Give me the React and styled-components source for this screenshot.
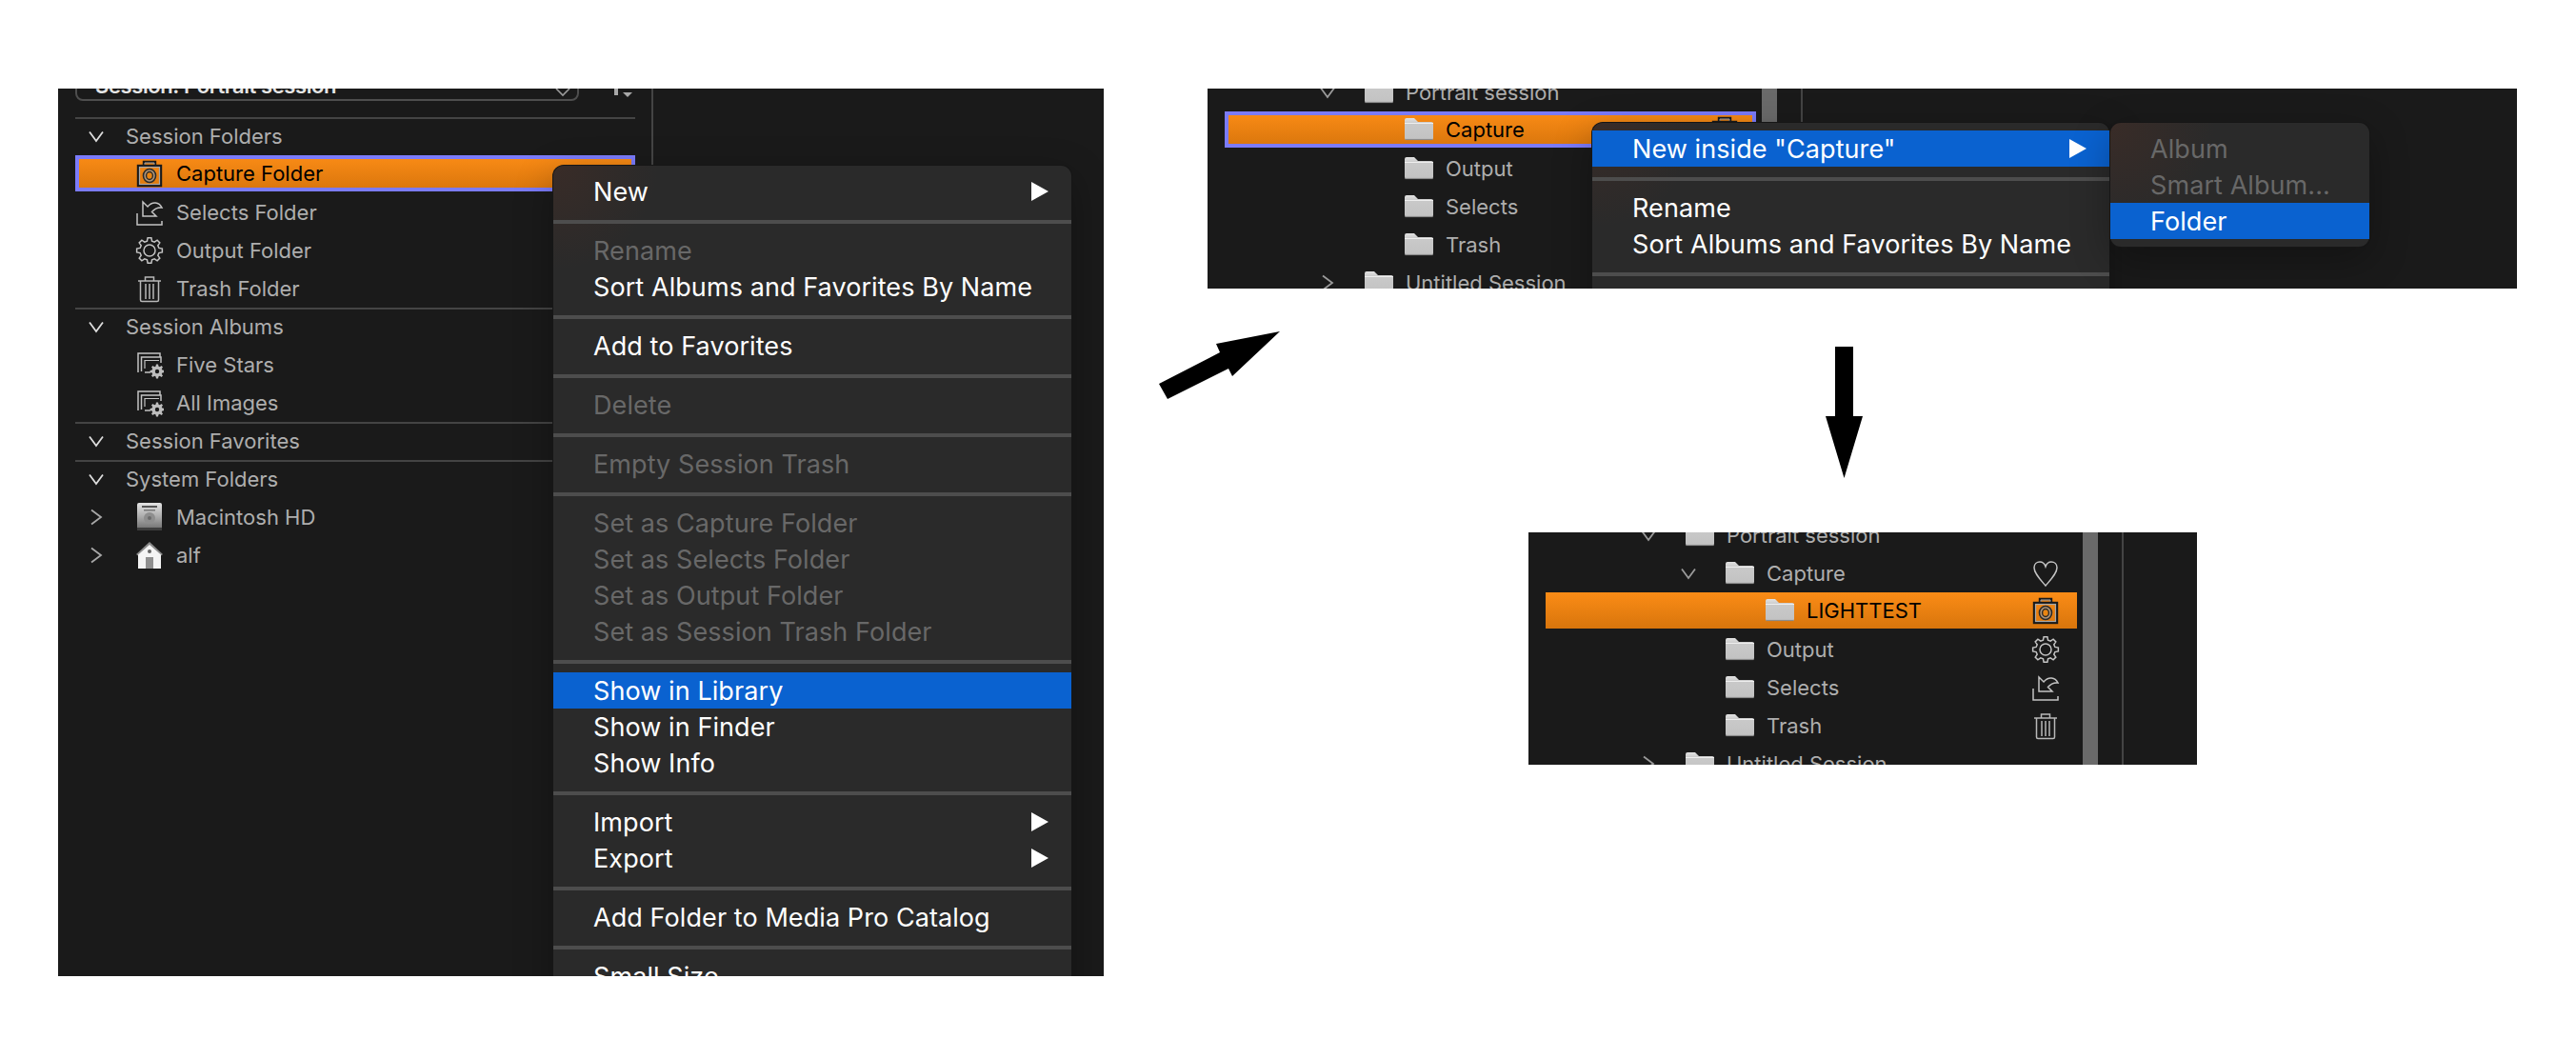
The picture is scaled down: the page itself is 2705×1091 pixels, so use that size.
import * as React from "react";
import styled, { createGlobalStyle } from "styled-components";

const gearPath = (cx, cy, outer, inner, teeth) => {
  const step = (Math.PI * 2) / teeth;
  let d = "";
  for (let i = 0; i < teeth; i++) {
    const a = i * step - Math.PI / 2;
    const pts = [
      [inner, a - step * 0.32],
      [outer, a - step * 0.18],
      [outer, a + step * 0.18],
      [inner, a + step * 0.32],
    ];
    pts.forEach(([r, t], j) => {
      const x = (cx + r * Math.cos(t)).toFixed(2);
      const y = (cy + r * Math.sin(t)).toFixed(2);
      d += `${i === 0 && j === 0 ? "M" : "L"}${x} ${y} `;
    });
  }
  return d + "Z";
};

const sessionRows = [
  { label: "Capture Folder", icon: "camera", selected: true, ring: true },
  { label: "Selects Folder", icon: "selects" },
  { label: "Output Folder", icon: "gear" },
  { label: "Trash Folder", icon: "trash" },
];

const mainMenu = [
  [{ label: "New", more: true }],
  [{ label: "Rename", off: true }, { label: "Sort Albums and Favorites By Name" }],
  [{ label: "Add to Favorites" }],
  [{ label: "Delete", off: true }],
  [{ label: "Empty Session Trash", off: true }],
  [
    { label: "Set as Capture Folder", off: true },
    { label: "Set as Selects Folder", off: true },
    { label: "Set as Output Folder", off: true },
    { label: "Set as Session Trash Folder", off: true },
  ],
  [{ label: "Show in Library", active: true }, { label: "Show in Finder" }, { label: "Show Info" }],
  [{ label: "Import", more: true }, { label: "Export", more: true }],
  [{ label: "Add Folder to Media Pro Catalog" }],
  [{ label: "Small Size" }],
];

const insideMenu = [
  [{ label: 'New inside "Capture"', more: true, active: true }],
  [{ label: "Rename" }, { label: "Sort Albums and Favorites By Name" }],
  [{ label: "" }],
];

const newMenu = [
  [{ label: "Album", off: true }, { label: "Smart Album...", off: true }, { label: "Folder", active: true }],
];

function Chevron({ open, color }) {
  return (
    <svg width="16" height="18" viewBox="0 0 16 18" fill="none" stroke={color} strokeWidth="1.8">
      {open ? <path d="M1 4.5 8 14 15 4.5" /> : <path d="M3 1.5 13 9 3 16.5" />}
    </svg>
  );
}

function Folder() {
  return (
    <svg width="30" height="24" viewBox="0 0 30 24">
      <defs>
        <linearGradient id="folderFill" x1="0" y1="0" x2="0" y2="1">
          <stop offset="0" stopColor="#e2e2e2" />
          <stop offset="0.25" stopColor="#c9c9c9" />
          <stop offset="1" stopColor="#c2c2c2" />
        </linearGradient>
      </defs>
      <path d="M0 2Q0 0 2 0H10L14 4H28Q30 4 30 6V21Q30 23 28 23H2Q0 23 0 21Z" fill="url(#folderFill)" />
      <path d="M0 5.5H30" stroke="#eeeeee" strokeWidth="1" />
      <path d="M0.5 22.5H29.5" stroke="#8c8c8c" strokeWidth="1.2" />
    </svg>
  );
}

function CameraIcon() {
  return (
    <svg width="30" height="30" viewBox="0 0 30 30" fill="none">
      <path d="M9 7V3H21V7" stroke="#1a1a1a" strokeWidth="2.4" />
      <path d="M10 6V4H20V6" stroke="#a8a8a8" strokeWidth="1" />
      <rect x="3" y="7" width="24" height="21" stroke="#1a1a1a" strokeWidth="2.4" />
      <rect x="4.5" y="8.5" width="21" height="18" stroke="#a8a8a8" strokeWidth="1.2" />
      <ellipse cx="15" cy="17.5" rx="6.5" ry="7" stroke="#2a2a2a" strokeWidth="1.6" fill="#9c9c9c" fillOpacity="0.75" />
      <ellipse cx="15" cy="17.5" rx="3.4" ry="4" stroke="#2a2a2a" strokeWidth="1.4" fill="#e98512" />
    </svg>
  );
}

function SelectsIcon() {
  return (
    <svg width="30" height="30" viewBox="0 0 30 30" fill="none" stroke="#c4c4c4" strokeWidth="1.5">
      <path d="M2 16V28H28V24" />
      <path d="M8 4V19H22L17.5 14.5C20 11.5 23.5 9.5 28 10C25 4 18 3 13 9Z" />
    </svg>
  );
}

function GearIcon() {
  return (
    <svg width="30" height="30" viewBox="0 0 30 30" fill="none" stroke="#c4c4c4" strokeWidth="1.5">
      <path d={gearPath(15, 15, 13.5, 10.2, 8)} />
      <circle cx="15" cy="15" r="6" />
    </svg>
  );
}

function TrashIcon() {
  return (
    <svg width="30" height="30" viewBox="0 0 30 30" fill="none" stroke="#b8b8b8" strokeWidth="1.5">
      <path d="M3 7H27" />
      <path d="M10.5 7V3H19.5V7" />
      <path d="M5.5 7V27Q5.5 28.5 7 28.5H23Q24.5 28.5 24.5 27V7" />
      <path d="M11 10V26M15 10V26M19 10V26" />
    </svg>
  );
}

function SmartAlbumIcon() {
  return (
    <svg width="30" height="30" viewBox="0 0 30 30" fill="none">
      <path d="M3 23V3H26V7" stroke="#c4c4c4" strokeWidth="1.5" />
      <path d="M6.5 22V7H27V13" stroke="#c4c4c4" strokeWidth="1.5" />
      <path d="M10 19V10.5H25" stroke="#c4c4c4" strokeWidth="1.2" />
      <path d="M10 23H16" stroke="#c4c4c4" strokeWidth="1.5" />
      <path d={gearPath(23, 22, 7.5, 5.6, 8)} fill="#bdbdbd" />
      <circle cx="23" cy="22" r="2.2" fill="#1a1a1a" />
    </svg>
  );
}

function DiskIcon() {
  return (
    <svg width="30" height="30" viewBox="0 0 30 30">
      <defs>
        <linearGradient id="diskFill" x1="0" y1="0" x2="0" y2="1">
          <stop offset="0" stopColor="#e4e4e4" />
          <stop offset="0.55" stopColor="#a8a8a8" />
          <stop offset="1" stopColor="#6e6e6e" />
        </linearGradient>
      </defs>
      <rect x="2" y="0" width="26" height="28" rx="2" fill="url(#diskFill)" />
      <rect x="7" y="3" width="16" height="2" fill="#555" />
      <rect x="9" y="7" width="12" height="1.5" fill="#777" />
      <circle cx="15" cy="16" r="6" fill="#8e8e8e" />
      <circle cx="15" cy="16" r="2" fill="#6a6a6a" />
      <rect x="2" y="26" width="26" height="3" fill="#3e3e3e" />
    </svg>
  );
}

function HomeIcon() {
  return (
    <svg width="30" height="30" viewBox="0 0 30 30">
      <path d="M15 1 29 14 27 15.5 15 5 3 15.5 1 14Z" fill="#8a8a8a" />
      <path d="M15 4 27 14.5V29H3V14.5Z" fill="#f4f4f4" />
      <circle cx="15" cy="11" r="2" fill="#666" />
      <rect x="11" y="17" width="8" height="12" fill="#8f8f8f" />
    </svg>
  );
}

function HeartIcon() {
  return (
    <svg width="30" height="30" viewBox="0 0 30 30" fill="none" stroke="#c4c4c4" strokeWidth="1.5">
      <path d="M15 28C9 21 3 15 3 9C3 5 6 3 9 3C12 3 14 5 15 8C16 5 18 3 21 3C24 3 27 5 27 9C27 15 21 21 15 28Z" />
    </svg>
  );
}

const icons = {
  camera: CameraIcon,
  selects: SelectsIcon,
  gear: GearIcon,
  trash: TrashIcon,
  smart: SmartAlbumIcon,
  disk: DiskIcon,
  home: HomeIcon,
  heart: HeartIcon,
};

function DropMenu({ groups, left, top, width }) {
  return (
    <Menu $left={left} $top={top} $width={width}>
      {groups.map((group, i) => (
        <React.Fragment key={i}>
          {i > 0 && <MenuSeparator />}
          {group.map((item) => (
            <MenuItem key={item.label} $off={item.off} $active={item.active}>
              {item.label}
              {item.more && <MenuArrow />}
            </MenuItem>
          ))}
        </React.Fragment>
      ))}
    </Menu>
  );
}

function SidebarRow({ label, icon, chevron, selected, ring }) {
  const Icon = icons[icon];
  return (
    <Row $selected={selected} $ring={ring} $pad={2}>
      <ChevronSlot $gap={21}>{chevron && <Chevron color="#a8a8a8" />}</ChevronSlot>
      <IconSlot>
        <Icon />
      </IconSlot>
      <Label $selected={selected}>{label}</Label>
    </Row>
  );
}

function SectionRow({ label }) {
  return (
    <Row $pad={2}>
      <ChevronSlot $gap={11}>
        <Chevron open color="#dddddd" />
      </ChevronSlot>
      <Label>{label}</Label>
    </Row>
  );
}

function FolderRow({ label, depth = 0, chevron, selected, ring, trailing }) {
  const Trail = icons[trailing];
  return (
    <Row $selected={selected} $ring={ring} $pad={88 + depth * 42} $padRight={18}>
      <ChevronSlot $gap={19}>
        {chevron && <Chevron open={chevron === "open"} color="#9a9a9a" />}
      </ChevronSlot>
      <IconSlot>
        <Folder />
      </IconSlot>
      <Label $selected={selected}>{label}</Label>
      {Trail && (
        <Trailing>
          <Trail />
        </Trailing>
      )}
    </Row>
  );
}

export default function App() {
  return (
    <>
      <GlobalStyle />
      <Page>
        <Panel $width={1098} $height={932}>
          <Sidebar>
            <SessionBar>
              <SessionSelect>
                <SessionName>Session: Portrait session</SessionName>
                <svg width="18" height="36" viewBox="0 0 18 36" fill="none" stroke="#9a9a9a" strokeWidth="1.6">
                  <path d="M2 13 9 6 16 13" />
                  <path d="M2 23 9 30 16 23" />
                </svg>
              </SessionSelect>
              <SortButton>
                <svg width="22" height="36" viewBox="0 0 22 36" fill="#a8a8a8">
                  <rect x="2" y="0" width="4" height="34" />
                  <path d="M11 31H21L16 36Z" />
                </svg>
              </SortButton>
            </SessionBar>
            <Section>
              <SectionRow label="Session Folders" />
              {sessionRows.map((r) => (
                <SidebarRow key={r.label} {...r} />
              ))}
            </Section>
            <Section>
              <SectionRow label="Session Albums" />
              <SidebarRow label="Five Stars" icon="smart" />
              <SidebarRow label="All Images" icon="smart" />
            </Section>
            <Section>
              <SectionRow label="Session Favorites" />
            </Section>
            <Section>
              <SectionRow label="System Folders" />
              <SidebarRow label="Macintosh HD" icon="disk" chevron />
              <SidebarRow label="alf" icon="home" chevron />
            </Section>
          </Sidebar>
          <DropMenu groups={mainMenu} left={520} top={81} width={544} />
        </Panel>

        <RightColumn>
          <Panel $width={1375} $height={210} $left={68}>
            <Outliner $shift={-16}>
              <Tree>
                <FolderRow label="Portrait session" chevron="open" />
                <FolderRow label="Capture" depth={1} selected ring trailing="camera" />
                <FolderRow label="Output" depth={1} />
                <FolderRow label="Selects" depth={1} />
                <FolderRow label="Trash" depth={1} />
                <FolderRow label="Untitled Session" chevron="closed" />
              </Tree>
              <ScrollBar />
              <SplitLine />
            </Outliner>
            <DropMenu groups={insideMenu} left={404} top={36} width={543} />
            <DropMenu groups={newMenu} left={948} top={36} width={272} />
          </Panel>

          <ArrowRow>
            <svg width="127" height="71" viewBox="1217 348 127 71">
              <path d="M1217 403 1281 370 1277 361 1344 348 1294 395 1290 387 1226 419Z" />
            </svg>
            <DownArrow>
              <svg width="39" height="138" viewBox="1917 364 39 138">
                <path d="M1927 364H1946V437H1956L1936.5 502 1917 437H1927Z" />
              </svg>
            </DownArrow>
          </ArrowRow>

          <Panel $width={702} $height={244} $left={405} $top={57}>
            <Outliner $shift={-17}>
              <Tree>
                <FolderRow label="Portrait session" chevron="open" />
                <FolderRow label="Capture" depth={1} chevron="open" trailing="heart" />
                <FolderRow label="LIGHTTEST" depth={2} selected trailing="camera" />
                <FolderRow label="Output" depth={1} trailing="gear" />
                <FolderRow label="Selects" depth={1} trailing="selects" />
                <FolderRow label="Trash" depth={1} trailing="trash" />
                <FolderRow label="Untitled Session" chevron="closed" />
              </Tree>
              <ScrollBar />
              <SplitLine />
            </Outliner>
          </Panel>
        </RightColumn>
      </Page>
    </>
  );
}

const GlobalStyle = createGlobalStyle`
  html, body {
    margin: 0;
    background: #fff;
  }
  * {
    box-sizing: border-box;
  }
`;

const Page = styled.div`
  display: flex;
  align-items: flex-start;
  width: 2705px;
  height: 1091px;
  padding: 93px 0 0 61px;
  overflow: hidden;
  background: #fff;
  font-family: Inter, "Liberation Sans", sans-serif;
`;

const Panel = styled.div`
  position: relative;
  flex: none;
  width: ${(p) => p.$width}px;
  height: ${(p) => p.$height}px;
  margin-left: ${(p) => p.$left || 0}px;
  margin-top: ${(p) => p.$top || 0}px;
  overflow: hidden;
  background: #1a1a1a;
`;

const RightColumn = styled.div`
  display: flex;
  flex-direction: column;
  margin-left: 41px;
`;

const ArrowRow = styled.div`
  display: flex;
  align-items: flex-start;
  height: 154px;
  margin: 45px 0 0 17px;
`;

const DownArrow = styled.div`
  margin: 16px 0 0 573px;
`;

const Sidebar = styled.div`
  width: 625px;
  height: 100%;
  padding: 0 17px 0 18px;
  border-right: 2px solid #444;
`;

const SessionBar = styled.div`
  display: flex;
  align-items: flex-end;
  height: 13px;
  margin-bottom: 17px;
`;

const SessionSelect = styled.div`
  display: flex;
  align-items: center;
  justify-content: space-between;
  flex: none;
  width: 529px;
  height: 36px;
  padding: 0 6px 0 19px;
  border: 2px solid #4e4e4e;
  border-radius: 8px;
`;

const SessionName = styled.span`
  margin-top: 4px;
  color: #e6e6e6;
  font-size: 22px;
  font-weight: 600;
  letter-spacing: -0.4px;
`;

const SortButton = styled.div`
  height: 36px;
  margin: 0 0 4px 35px;
`;

const Section = styled.div`
  box-shadow: inset 0 2px 0 #444;
`;

const Row = styled.div`
  display: flex;
  align-items: center;
  height: ${(p) => (p.$selected ? 38 : 40)}px;
  margin-bottom: ${(p) => (p.$selected ? 2 : 0)}px;
  padding-left: ${(p) => p.$pad}px;
  padding-right: ${(p) => p.$padRight || 0}px;
  background: ${(p) => (p.$selected ? "linear-gradient(#fb8c16, #d8750c)" : "none")};
  box-shadow: ${(p) => (p.$ring ? "inset 0 0 0 4px #7b7bfa" : "none")};
`;

const ChevronSlot = styled.div`
  display: flex;
  align-items: center;
  justify-content: center;
  flex: none;
  width: 40px;
  margin-right: ${(p) => p.$gap}px;
`;

const IconSlot = styled.div`
  display: flex;
  align-items: center;
  justify-content: center;
  flex: none;
  width: 30px;
  margin-right: 13px;
`;

const Label = styled.span`
  color: ${(p) => (p.$selected ? "#000" : "#aeaeae")};
  font-size: 22px;
  white-space: nowrap;
`;

const Trailing = styled.div`
  display: flex;
  margin-left: auto;
`;

const Outliner = styled.div`
  display: flex;
  align-items: stretch;
  height: 320px;
  margin-top: ${(p) => p.$shift}px;
  padding-left: 18px;
`;

const Tree = styled.div`
  flex: none;
  width: 558px;
`;

const ScrollBar = styled.div`
  flex: none;
  width: 16px;
  margin-left: 6px;
  background: #6a6a6a;
`;

const SplitLine = styled.div`
  flex: none;
  width: 2px;
  margin-left: 25px;
  background: #444;
`;

const Menu = styled.div`
  position: absolute;
  left: ${(p) => p.$left}px;
  top: ${(p) => p.$top}px;
  width: ${(p) => p.$width}px;
  padding: 8px 0;
  border-radius: 11px;
  background: radial-gradient(circle at 0 0, rgba(110, 50, 30, 0.22), rgba(110, 50, 30, 0) 110px), #2a2a2a;
  box-shadow: 0 0 0 1px #161616, 0 12px 40px rgba(0, 0, 0, 0.3);
`;

const MenuItem = styled.div`
  position: relative;
  display: flex;
  align-items: center;
  height: 38px;
  padding-left: 42px;
  background: ${(p) => (p.$active ? "#0a62d0" : "none")};
  color: ${(p) => (p.$off ? "#686868" : "#fff")};
  font-size: 27px;
  letter-spacing: 0.08px;
  white-space: nowrap;
`;

const MenuArrow = styled.span`
  position: absolute;
  right: 24px;
  top: 9px;
  border-left: 18px solid #fff;
  border-top: 10px solid transparent;
  border-bottom: 10px solid transparent;
`;

const MenuSeparator = styled.div`
  height: 4px;
  margin: 11px 0 9px;
  background: #4d4d4d;
`;
